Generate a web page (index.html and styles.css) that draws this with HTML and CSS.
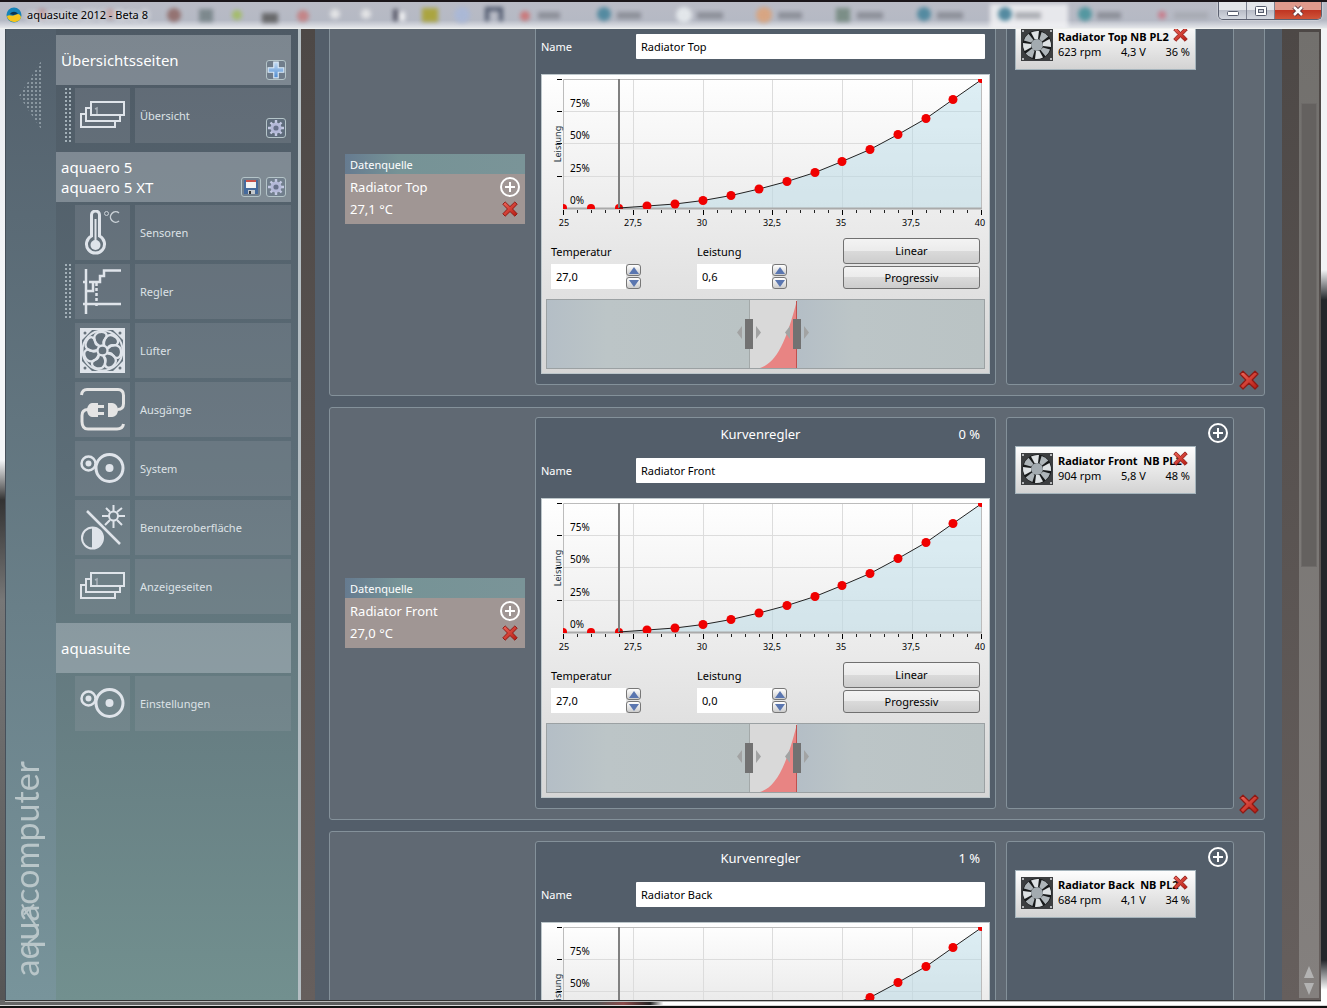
FILE: index.html
```html
<!DOCTYPE html>
<html lang="de">
<head>
<meta charset="utf-8">
<title>aquasuite 2012 - Beta 8</title>
<link rel="stylesheet" href="styles.css">
</head>
<body>
<svg class="sprite" width="0" height="0" aria-hidden="true">
  <defs>
    <linearGradient id="red" x1="0" y1="0" x2="1" y2="1"><stop offset="0" stop-color="#f0685c"/><stop offset="1" stop-color="#b4180f"/></linearGradient>
    <linearGradient id="blue" x1="0" y1="0" x2="0" y2="1"><stop offset="0" stop-color="#c4dcf4"/><stop offset="1" stop-color="#4d8ad0"/></linearGradient>
    <linearGradient id="shade" x1="0" x2="1"><stop offset="0" stop-color="#b4bec6"/><stop offset=".3" stop-color="#bcc5c7"/><stop offset="1" stop-color="#bac3c4"/></linearGradient>
    <pattern id="dots" width="4" height="4" patternUnits="userSpaceOnUse"><rect width="2" height="2" fill="#8a97a0"/></pattern>
    <clipPath id="plot"><rect x="21" y="4" width="419" height="130"/></clipPath>
  </defs>
  <symbol id="cross" viewBox="0 0 20 20">
    <path d="M4 1.200 L10 7 L16 1.200 L19 4 L13.200 10 L19 16 L16 19 L10 13.200 L4 19 L1 16 L6.800 10 L1 4 Z" fill="url(#red)" stroke="#8e1a14" stroke-width="1.200" stroke-linejoin="round"/>
  </symbol>
  <symbol id="add" viewBox="0 0 20 20">
    <circle cx="10" cy="10" r="9" fill="none" stroke="#fff" stroke-width="2"/>
    <path d="M10 5v10M5 10h10" stroke="#fff" stroke-width="2"/>
  </symbol>
  <symbol id="gear" viewBox="0 0 16 16">
    <path d="M8 0v16M0 8h16M2.500 2.500l11 11M13.500 2.500l-11 11" stroke="#c3c9e2" stroke-width="2.400"/>
    <circle cx="8" cy="8" r="4" fill="none" stroke="#b4b9d8" stroke-width="3"/>
    <circle cx="8" cy="8" r="2.600" fill="#67718a"/>
  </symbol>
  <symbol id="pages" viewBox="0 0 45 45">
    <g fill="none" stroke="#dfe4ea" stroke-width="2">
      <rect x="11" y="9" width="33" height="13"/>
      <path d="M11 15H6v13h34v-6M6 21H1v13h34v-6"/>
    </g>
    <path d="M15 16l2-1v6" fill="none" stroke="#aab3bb" stroke-width="1.500"/>
  </symbol>
  <symbol id="thermo" viewBox="0 0 45 45">
    <path d="M11.500 26V5a4 4 0 0 1 8 0v21a9 9 0 1 1-8 0z" fill="none" stroke="#dfe4ea" stroke-width="3"/>
    <circle cx="15.500" cy="35" r="5" fill="#dfe4ea"/>
    <path d="M15.500 9v24" stroke="#dfe4ea" stroke-width="2"/>
    <circle cx="26.500" cy="3.500" r="2" fill="none" stroke="#c9d0d6"/>
    <path d="M39 3a5.200 5.200 0 1 0 0 8" fill="none" stroke="#c9d0d6" stroke-width="1.500"/>
  </symbol>
  <symbol id="control" viewBox="0 0 45 45">
    <g fill="none" stroke="#dfe4ea" stroke-width="2.500">
      <path d="M6 0v45M3 35h38M3 13h4M6 22h7v-9M9 13h11V7h4V1.500h17"/>
      <path d="M16.500 14v24" stroke-dasharray="3 2"/>
    </g>
  </symbol>
  <symbol id="fan" viewBox="0 0 45 45">
    <rect x="1" y="1" width="43" height="43" fill="none" stroke="#dfe4ea" stroke-width="2"/>
    <path d="M1 1h12L1 13zM44 1v12L32 1zM1 44V32l12 12zM44 44H32l12-12z" fill="#dfe4ea"/>
    <g fill="#68747d"><circle cx="5" cy="5" r="1.500"/><circle cx="40" cy="5" r="1.500"/><circle cx="5" cy="40" r="1.500"/><circle cx="40" cy="40" r="1.500"/></g>
    <circle cx="22.500" cy="22.500" r="20" fill="#63707a" stroke="#dfe4ea" stroke-width="2"/>
    <g fill="none" stroke="#dfe4ea" stroke-width="2.300">
      <circle cx="22.500" cy="22.500" r="5"/>
      <path id="blade" d="M19.500 18C13 14 12 6 20 4c7-1 8 4 5 7-2 2-2 4-1 6"/>
      <use href="#blade" transform="rotate(51.400 22.500 22.500)"/>
      <use href="#blade" transform="rotate(102.900 22.500 22.500)"/>
      <use href="#blade" transform="rotate(154.300 22.500 22.500)"/>
      <use href="#blade" transform="rotate(205.700 22.500 22.500)"/>
      <use href="#blade" transform="rotate(257.100 22.500 22.500)"/>
      <use href="#blade" transform="rotate(308.600 22.500 22.500)"/>
    </g>
  </symbol>
  <symbol id="plug" viewBox="0 0 45 45">
    <g fill="none" stroke="#e4e4e4" stroke-width="3">
      <path d="M1.500 8C2 4 4 2.500 7 2.500h31c4 0 5.500 2 5.500 6v8c0 4-2 6-6 6"/>
      <path d="M8 22.500c-4 0-6 2-6 6v6c0 5 2 7.500 6 7.500h29c4 0 6-2 6.500-5"/>
      <path d="M17 19.500h7M17 26.500h7" stroke-width="3"/>
    </g>
    <path d="M18 16v14h-6c-3 0-5-4-5-7s2-7 5-7zM28 16h4c4 0 6 4 6 7s-2 7-6 7h-4z" fill="#e4e4e4"/>
  </symbol>
  <symbol id="rings" viewBox="0 0 45 45">
    <g fill="none" stroke="#dfe4ea">
      <circle cx="29.500" cy="22" r="13.500" stroke-width="3"/>
      <circle cx="8.500" cy="17.500" r="7" stroke-width="2.500"/>
    </g>
    <circle cx="29.500" cy="22" r="4" fill="#dfe4ea"/><circle cx="8.500" cy="17.500" r="3" fill="#dfe4ea"/>
  </symbol>
  <symbol id="display" viewBox="0 0 45 45">
    <g fill="none" stroke="#dfe4ea" stroke-width="2">
      <path d="M7 6l33 33" stroke-width="2.500"/>
      <circle cx="12.500" cy="33" r="10.500"/>
      <circle cx="33.500" cy="11" r="4.500"/>
      <path d="M33.500 0v6M33.500 16v7M22 11h7M38 11h7M26 3l4 4M37 15l5 5M42 3l-5 4M30 15l-5 5"/>
    </g>
    <path d="M12 22.500a10.500 10.500 0 0 1 0 21z" fill="#dfe4ea"/>
  </symbol>
  <symbol id="cooler" viewBox="0 0 32 32">
    <rect width="32" height="32" fill="#3c3e40"/>
    <circle cx="16" cy="16" r="14.500" fill="#17191a"/>
    <g fill="#dde1e3">
      <path id="vane" d="M13.500 10L10 3.500q4-2 8-1.500l-1 8z"/>
      <use href="#vane" transform="rotate(90 16 16)"/><use href="#vane" transform="rotate(180 16 16)"/><use href="#vane" transform="rotate(270 16 16)"/>
    </g>
    <g fill="#aeb5b9">
      <use href="#vane" transform="rotate(45 16 16)"/><use href="#vane" transform="rotate(135 16 16)"/><use href="#vane" transform="rotate(225 16 16)"/><use href="#vane" transform="rotate(315 16 16)"/>
    </g>
    <circle cx="16" cy="16" r="6" fill="#a3abb0"/>
    <g fill="#dfe2e4"><circle cx="2" cy="2" r="1"/><circle cx="30" cy="2" r="1"/><circle cx="2" cy="30" r="1"/><circle cx="30" cy="30" r="1"/></g>
  </symbol>
  <symbol id="curve" viewBox="0 0 447 158">
    <path d="M91.500 4v129M161.500 4v129M230.500 4v129M300.500 4v129M370.500 4v129M22 36.500h417M22 68.500h417M22 101.500h417" stroke="#dcdcdc"/>
    <path d="M77 133L105 131 133 129 161 125.500 189 120.500 217 114 245 106.500 273 97.500 300 86.500 328 74.500 356 59.500 384 43.500 411 24.500 439 5V133z" fill="#add8e6" fill-opacity=".4"/>
    <path d="M21.500 133V4.500H439.500V133" fill="none" stroke="#bcbcbc"/>
    <path d="M21 133.500h419" stroke="#aaa" stroke-width="2"/>
    <g fill="#f00000" clip-path="url(#plot)">
      <circle cx="21" cy="133" r="4"/><circle cx="49" cy="133" r="4"/><circle cx="77" cy="133" r="4"/>
    </g>
    <path d="M77 4v129" stroke="#808080" stroke-width="2"/>
    <path d="M77 133L105 131 133 129 161 125.500 189 120.500 217 114 245 106.500 273 97.500 300 86.500 328 74.500 356 59.500 384 43.500 411 24.500 439 5" fill="none" stroke="#222"/>
    <g fill="#f00000" clip-path="url(#plot)">
      <circle cx="105" cy="131" r="4.500"/><circle cx="133" cy="129" r="4.500"/><circle cx="161" cy="125.500" r="4.500"/><circle cx="189" cy="120.500" r="4.500"/><circle cx="217" cy="114" r="4.500"/><circle cx="245" cy="106.500" r="4.500"/><circle cx="273" cy="97.500" r="4.500"/><circle cx="300" cy="86.500" r="4.500"/><circle cx="328" cy="74.500" r="4.500"/><circle cx="356" cy="59.500" r="4.500"/><circle cx="384" cy="43.500" r="4.500"/><circle cx="411" cy="24.500" r="4.500"/><circle cx="439" cy="5" r="3"/>
    </g>
    <path d="M15 4.500h5M15 36.500h5M15 68.500h5M15 101.500h5M21.500 135v5M91.500 135v5M161.500 135v5M230.500 135v5M300.500 135v5M370.500 135v5M439.500 135v5" stroke="#000"/>
    <path d="M35.500 135v3M49.500 135v3M63.500 135v3M77.500 135v3M105.500 135v3M119.500 135v3M133.500 135v3M147.500 135v3M175.500 135v3M189.500 135v3M203.500 135v3M217.500 135v3M244.500 135v3M258.500 135v3M272.500 135v3M286.500 135v3M314.500 135v3M328.500 135v3M342.500 135v3M356.500 135v3M384.500 135v3M398.500 135v3M411.500 135v3M425.500 135v3" stroke="#222"/>
  </symbol>
  <symbol id="range" viewBox="0 0 439 70">
    <rect width="204" height="70" fill="url(#shade)"/>
    <rect x="251" width="188" height="70" fill="url(#shade)"/>
    <rect x="204" width="47" height="70" fill="#d9d9d9"/>
    <path d="M214 69C230 64 240 44 251 1V69z" fill="#e88483"/>
    <path d="M203.500 0v70" stroke="#a3a9a9"/><path d="M250.500 2v68" stroke="#c0504e"/>
    <rect x=".5" y=".5" width="438" height="69" fill="none" stroke="#9ba1a3"/>
    <path d="M196 27v13l-5-6.500zM210 27v13l5-6.500zM244 27v13l-5-6.500zM258 27v13l5-6.500z" fill="#a2a3a3"/>
    <path d="M199 20h8v30h-8zM247 20h8v30h-8z" fill="#727272"/>
  </symbol>
</svg>

<header class="titlebar">
  <svg class="backdrop" height="29" width="1215" aria-hidden="true">
    <g class="haze">
      <circle cx="42" cy="14" r="5" fill="#b07c80"/><circle cx="110" cy="14" r="5" fill="#c89a98"/><circle cx="174" cy="15" r="7" fill="#8c625e"/><rect x="199" y="9" width="14" height="13" fill="#6f7d80"/><circle cx="237" cy="15" r="5" fill="#a0bd55"/><rect x="262" y="13" width="16" height="10" fill="#555"/><circle cx="303" cy="16" r="6" fill="#c77878"/><circle cx="335" cy="14" r="5" fill="#eee"/><circle cx="366" cy="14" r="5" fill="#eee"/>
      <rect x="393" y="9" width="5" height="12" fill="#445"/><rect x="399" y="12" width="6" height="9" fill="#fff"/><rect x="422" y="8" width="16" height="14" fill="#a8a020"/><circle cx="462" cy="15" r="8" fill="#a8b8da"/><path d="M487 21V9h14v12" stroke="#39445c" stroke-width="4" fill="none"/>
      <circle cx="525" cy="16" r="5" fill="#cf6a6a"/><rect x="538" y="12" width="22" height="7" fill="#83868f"/>
      <circle cx="604" cy="14" r="7" fill="#3c7f98"/><rect x="617" y="12" width="24" height="7" fill="#83868f"/>
      <circle cx="684" cy="15" r="8" fill="#eef2f4"/><rect x="697" y="12" width="26" height="7" fill="#83868f"/>
      <circle cx="764" cy="15" r="8" fill="#e0a173"/><rect x="778" y="12" width="24" height="7" fill="#83868f"/>
      <rect x="836" y="8" width="14" height="14" fill="#6d8478"/><rect x="857" y="12" width="26" height="7" fill="#83868f"/>
      <circle cx="924" cy="14" r="7" fill="#3c7f98"/><rect x="937" y="12" width="26" height="7" fill="#83868f"/>
      <rect x="990" y="4" width="78" height="25" fill="#f4f4f6"/><circle cx="1005" cy="14" r="7" fill="#3c7f98"/><rect x="1015" y="12" width="26" height="7" fill="#abadb2"/>
      <circle cx="1085" cy="14" r="7" fill="#3c8f98"/><rect x="1097" y="12" width="24" height="7" fill="#83868f"/>
      <circle cx="1162" cy="15" r="4" fill="#cc7080"/><rect x="1174" y="12" width="34" height="7" fill="#a5a8b0"/>
    </g>
  </svg>
  <svg class="appicon" viewBox="0 0 16 16" width="16" height="16" aria-hidden="true"><circle cx="8" cy="8" r="7.500" fill="#1683b8"/><path d="M1 9c3-2 5 1 8-1s5-1 6 2c0 3-4 5-7 5S1 12 1 9z" fill="#f4c51e"/><path d="M4 7c2-3 6-3 8 0-3 0-4 2-8 0z" fill="#0b3550"/></svg>
  <h1 class="title">aquasuite 2012 - Beta 8</h1>
  <div class="winbuttons">
    <button class="winbtn" aria-label="Minimieren"><svg viewBox="0 0 14 12" width="14" height="12"><rect x="1.500" y="6.500" width="11" height="4" rx="1" fill="#fff" stroke="#555b6c"/></svg></button>
    <button class="winbtn" aria-label="Maximieren"><svg viewBox="0 0 14 12" width="14" height="12"><rect x="1.500" y="1.500" width="11" height="9" rx="1" fill="#fff" stroke="#555b6c"/><rect x="4.500" y="4.500" width="5" height="3" fill="#c8ccd6" stroke="#555b6c"/></svg></button>
    <button class="winbtn close" aria-label="Schließen"><svg viewBox="0 0 14 12" width="14" height="12"><path d="M3 2l8 8M11 2l-8 8" stroke="#5a3038" stroke-width="4.500"/><path d="M3 2l8 8M11 2l-8 8" stroke="#fff" stroke-width="2.500"/></svg></button>
  </div>
</header>

<div class="window">
  <aside class="rail">
    <svg class="collapse" viewBox="0 0 24 74" width="24" height="74" aria-hidden="true"><path d="M24 0v74L0 38z" fill="url(#dots)"/></svg>
    <div class="brand">aquacomputer
      <svg class="swirl" viewBox="0 0 24 60" width="24" height="60" aria-hidden="true"><path d="M4 6C8 16 18 24 20 32c1 8-6 8-9 12-2 4 1 8 1 12M6 16l10-10" fill="none" stroke="#b9c6c9" stroke-width="2"/></svg>
    </div>
  </aside>

  <nav class="menu">
    <section class="group">
      <div class="head"><h2>Übersichtsseiten</h2>
        <div class="tools"><button class="tool" aria-label="Seite hinzufügen"><svg viewBox="0 0 16 16" width="18" height="18"><path d="M6 1h4v5h5v4h-5v5H6v-5H1V6h5z" fill="url(#blue)" stroke="#dcebf8"/></svg></button></div>
      </div>
      <div class="item"><span class="grip"></span><a class="link" href="#uebersicht"><span class="tile"><svg><use href="#pages"/></svg></span><span class="label">Übersicht</span></a>
        <button class="tool ontile" aria-label="Übersicht bearbeiten"><svg viewBox="0 0 16 16" width="16" height="16"><use href="#gear"/></svg></button></div>
    </section>
    <section class="group">
      <div class="head"><h2>aquaero 5<br>aquaero 5 XT</h2>
        <div class="tools">
          <button class="tool" aria-label="Speichern"><svg viewBox="0 0 16 16" width="16" height="16"><rect x="1" y="1" width="14" height="14" fill="#456a9c"/><rect x="3" y="1" width="10" height="8" fill="#f4f4f4"/><rect x="3" y="1" width="10" height="2" fill="#c8544c"/><rect x="5" y="11" width="7" height="4" fill="#c4c8cc"/><rect x="6" y="12" width="2" height="3" fill="#333"/></svg></button>
          <button class="tool" aria-label="Gerät einstellen"><svg viewBox="0 0 16 16" width="16" height="16"><use href="#gear"/></svg></button>
        </div>
      </div>
      <div class="item"><a class="link" href="#sensoren"><span class="tile"><svg><use href="#thermo"/></svg></span><span class="label">Sensoren</span></a></div>
      <div class="item"><span class="grip"></span><a class="link" href="#regler"><span class="tile"><svg><use href="#control"/></svg></span><span class="label">Regler</span></a></div>
      <div class="item"><a class="link" href="#luefter"><span class="tile"><svg><use href="#fan"/></svg></span><span class="label">Lüfter</span></a></div>
      <div class="item"><a class="link" href="#ausgaenge"><span class="tile"><svg><use href="#plug"/></svg></span><span class="label">Ausgänge</span></a></div>
      <div class="item"><a class="link" href="#system"><span class="tile"><svg><use href="#rings"/></svg></span><span class="label">System</span></a></div>
      <div class="item"><a class="link" href="#oberflaeche"><span class="tile"><svg><use href="#display"/></svg></span><span class="label">Benutzeroberfläche</span></a></div>
      <div class="item"><a class="link" href="#anzeigeseiten"><span class="tile"><svg><use href="#pages"/></svg></span><span class="label">Anzeigeseiten</span></a></div>
    </section>
    <section class="group">
      <div class="head"><h2>aquasuite</h2></div>
      <div class="item"><a class="link" href="#einstellungen"><span class="tile"><svg><use href="#rings"/></svg></span><span class="label">Einstellungen</span></a></div>
    </section>
  </nav>

  <main class="main">
    <div class="list">

      <article class="panel">
        <section class="source">
          <h3>Datenquelle</h3>
          <div class="sourcebody">
            <p>Radiator Top</p><button class="icon" aria-label="Datenquelle wählen"><svg><use href="#add"/></svg></button>
            <p>27,1 °C</p><button class="icon small" aria-label="Datenquelle entfernen"><svg><use href="#cross"/></svg></button>
          </div>
        </section>
        <section class="curve">
          <div class="curvehead"></div>
          <div class="namerow"><label for="n1">Name</label><input id="n1" type="text" value="Radiator Top"></div>
          <div class="card">
            <svg class="chart" viewBox="0 0 447 158">
              <use href="#curve"/>
              <g class="axis"><text x="28" y="32">75%</text><text x="28" y="64">50%</text><text x="28" y="97">25%</text><text x="28" y="129">0%</text></g>
              <g class="axis mid"><text x="22" y="151">25</text><text x="91" y="151">27,5</text><text x="160" y="151">30</text><text x="230" y="151">32,5</text><text x="299" y="151">35</text><text x="369" y="151">37,5</text><text x="438" y="151">40</text></g>
              <text class="ylabel" transform="translate(19 69) rotate(-90)">Leistung</text>
            </svg>
            <div class="form">
              <div class="field"><label for="t1">Temperatur</label><div class="spin"><input id="t1" type="text" value="27,0"><div class="steps"><button aria-label="Temperatur erhöhen"><i class="up"></i></button><button aria-label="Temperatur senken"><i class="down"></i></button></div></div></div>
              <div class="field"><label for="l1">Leistung</label><div class="spin"><input id="l1" type="text" value="0,6"><div class="steps"><button aria-label="Leistung erhöhen"><i class="up"></i></button><button aria-label="Leistung senken"><i class="down"></i></button></div></div></div>
              <div class="modes"><button>Linear</button><button>Progressiv</button></div>
            </div>
            <svg class="range" viewBox="0 0 439 70"><use href="#range"/></svg>
          </div>
        </section>
        <section class="outputs">
          <button class="icon" aria-label="Ausgang hinzufügen"><svg><use href="#add"/></svg></button>
          <div class="output"><svg class="cooler"><use href="#cooler"/></svg>
            <div class="info"><strong>Radiator Top NB PL2</strong><div class="values"><span>623 rpm</span><span>4,3 V</span><span>36 %</span></div></div>
            <button class="remove" aria-label="Ausgang entfernen"><svg><use href="#cross"/></svg></button></div>
        </section>
        <button class="icon delete" aria-label="Regler löschen"><svg><use href="#cross"/></svg></button>
      </article>

      <article class="panel">
        <section class="source">
          <h3>Datenquelle</h3>
          <div class="sourcebody">
            <p>Radiator Front</p><button class="icon" aria-label="Datenquelle wählen"><svg><use href="#add"/></svg></button>
            <p>27,0 °C</p><button class="icon small" aria-label="Datenquelle entfernen"><svg><use href="#cross"/></svg></button>
          </div>
        </section>
        <section class="curve">
          <div class="curvehead"><h3>Kurvenregler</h3><output>0 %</output></div>
          <div class="namerow"><label for="n2">Name</label><input id="n2" type="text" value="Radiator Front"></div>
          <div class="card">
            <svg class="chart" viewBox="0 0 447 158">
              <use href="#curve"/>
              <g class="axis"><text x="28" y="32">75%</text><text x="28" y="64">50%</text><text x="28" y="97">25%</text><text x="28" y="129">0%</text></g>
              <g class="axis mid"><text x="22" y="151">25</text><text x="91" y="151">27,5</text><text x="160" y="151">30</text><text x="230" y="151">32,5</text><text x="299" y="151">35</text><text x="369" y="151">37,5</text><text x="438" y="151">40</text></g>
              <text class="ylabel" transform="translate(19 69) rotate(-90)">Leistung</text>
            </svg>
            <div class="form">
              <div class="field"><label for="t2">Temperatur</label><div class="spin"><input id="t2" type="text" value="27,0"><div class="steps"><button aria-label="Temperatur erhöhen"><i class="up"></i></button><button aria-label="Temperatur senken"><i class="down"></i></button></div></div></div>
              <div class="field"><label for="l2">Leistung</label><div class="spin"><input id="l2" type="text" value="0,0"><div class="steps"><button aria-label="Leistung erhöhen"><i class="up"></i></button><button aria-label="Leistung senken"><i class="down"></i></button></div></div></div>
              <div class="modes"><button>Linear</button><button>Progressiv</button></div>
            </div>
            <svg class="range" viewBox="0 0 439 70"><use href="#range"/></svg>
          </div>
        </section>
        <section class="outputs">
          <button class="icon" aria-label="Ausgang hinzufügen"><svg><use href="#add"/></svg></button>
          <div class="output"><svg class="cooler"><use href="#cooler"/></svg>
            <div class="info"><strong>Radiator Front&nbsp; NB PL2</strong><div class="values"><span>904 rpm</span><span>5,8 V</span><span>48 %</span></div></div>
            <button class="remove" aria-label="Ausgang entfernen"><svg><use href="#cross"/></svg></button></div>
        </section>
        <button class="icon delete" aria-label="Regler löschen"><svg><use href="#cross"/></svg></button>
      </article>

      <article class="panel">
        <section class="source"></section>
        <section class="curve">
          <div class="curvehead"><h3>Kurvenregler</h3><output>1 %</output></div>
          <div class="namerow"><label for="n3">Name</label><input id="n3" type="text" value="Radiator Back"></div>
          <div class="card">
            <svg class="chart" viewBox="0 0 447 158">
              <use href="#curve"/>
              <g class="axis"><text x="28" y="32">75%</text><text x="28" y="64">50%</text></g>
              <text class="ylabel" transform="translate(19 69) rotate(-90)">Leistung</text>
            </svg>
          </div>
        </section>
        <section class="outputs">
          <button class="icon" aria-label="Ausgang hinzufügen"><svg><use href="#add"/></svg></button>
          <div class="output"><svg class="cooler"><use href="#cooler"/></svg>
            <div class="info"><strong>Radiator Back&nbsp; NB PL2</strong><div class="values"><span>684 rpm</span><span>4,1 V</span><span>34 %</span></div></div>
            <button class="remove" aria-label="Ausgang entfernen"><svg><use href="#cross"/></svg></button></div>
        </section>
      </article>
    </div>
  </main>

  <div class="scroll">
    <div class="track"><div class="thumb"></div><i class="arrow up"></i><i class="arrow down"></i></div>
  </div>
</div>
</body>
</html>
```
FILE: styles.css
```css
* { box-sizing: border-box; }
body {
  margin: 0;
  height: 100vh;
  display: flex;
  flex-direction: column;
  overflow: hidden;
  font: 11px/16px "Noto Sans", "Open Sans", sans-serif;
  color: #fff;
  background:
    linear-gradient(#d8d8d8, #d8d8d8) bottom 2px left 0 / 100% 1px no-repeat,
    linear-gradient(#111, #111) bottom / 100% 2px no-repeat,
    linear-gradient(90deg, #666, #555 45%, #8a4a4a 47%, #222 49%, #fff 50%) bottom / 100% 8px no-repeat,
    linear-gradient(#f2f3f5 270px, #24262a 300px, #24262a 960px, #fff 990px) right / 6px 100% no-repeat,
    linear-gradient(#e6e9ee, #f4f6f8 300px, #f4f6f8 460px, #333 500px, #777 600px, #555);
}
h1, h2, h3, p { margin: 0; font-weight: 400; }
button, input { font: inherit; color: inherit; padding: 0; margin: 0; border: 0; background: none; }
button svg { display: block; }
.sprite { position: absolute; }

/* title bar */
.titlebar {
  position: relative;
  flex: none;
  height: 29px;
  display: flex;
  align-items: center;
  gap: 5px;
  padding-left: 6px;
  border-top: 2px solid #1a1519;
  border-bottom: 1px solid #eef0ee;
  background: linear-gradient(#b9bbc5, #b5b9c4 70%, #e4e6ea);
  color: #000;
  overflow: hidden;
}
.backdrop { position: absolute; left: 0; top: -2px; }
.haze { filter: blur(2px); opacity: .8; }
.appicon, .title { position: relative; }
.title { flex: 1; font-size: 11px; text-shadow: 0 0 6px #fff, 0 0 6px #fff; }
.winbuttons {
  position: relative;
  align-self: flex-start;
  display: flex;
  margin-right: 5px;
  border: 1px solid #5b6070;
  border-top: 0;
  border-radius: 0 0 5px 5px;
  overflow: hidden;
  box-shadow: 0 0 2px #fff;
}
.winbtn {
  width: 28px;
  height: 17px;
  display: grid;
  place-items: center;
  border-right: 1px solid #7c8190;
  background: linear-gradient(#e4e6ea 45%, #b9bdc8 50%, #d4d8e0);
}
.winbtn.close { width: 46px; border: 0; background: linear-gradient(#e09a8c 45%, #c03522 50%, #d0553a); }

/* window body */
.window {
  flex: 1;
  min-height: 0;
  display: flex;
  margin: 0 6px 8px 5px;
  border-left: 1px solid #46505a;
  background: linear-gradient(#4d4846, #665f5d);
  box-shadow: 0 1px #333, 0 2px #bbb;
}
.rail {
  flex: none;
  width: 50px;
  display: flex;
  flex-direction: column;
  justify-content: space-between;
  align-items: center;
  padding: 29px 0 24px;
  background: linear-gradient(#53606c, #78949b);
}
.brand {
  position: relative;
  margin-right: 10px;
  writing-mode: vertical-rl;
  transform: rotate(180deg);
  font: 400 34px/40px Lato, sans-serif;
  color: #b9c6c9;
}
.swirl { position: absolute; left: 4px; top: 18px; transform: rotate(180deg); }

.menu {
  flex: none;
  width: 245px;
  display: flex;
  flex-direction: column;
  gap: 9px;
  padding: 6px 7px 0 0;
  border-right: 3px solid #b4bec3;
  background: linear-gradient(#4e5a65, #5c6d77 45%, #72908f);
}
.group { display: flex; flex-direction: column; gap: 4px; }
.head {
  display: flex;
  align-items: center;
  height: 50px;
  margin-bottom: -1px;
  padding: 0 5px;
  background: rgba(220, 225, 230, .33);
}
.head h2 { flex: 1; font-size: 15px; line-height: 20px; }
.tools { align-self: flex-end; display: flex; gap: 5px; padding-bottom: 5px; }
.tool {
  width: 20px;
  height: 20px;
  display: grid;
  place-items: center;
  border: 1px solid #b4c4c8;
  border-radius: 3px;
  background: rgba(90, 105, 130, .35);
}
.item { position: relative; display: flex; justify-content: flex-end; gap: 4px; height: 55px; }
.grip {
  width: 6px;
  height: 56px;
  background: conic-gradient(#a3b0b8 25%, transparent 0) -2px 0 / 4px 4px;
}
.link { display: flex; gap: 5px; width: 216px; color: #dde2e6; text-decoration: none; }
.tile, .label { display: flex; align-items: center; background: rgba(160, 165, 172, .22); }
.tile { width: 55px; justify-content: center; }
.tile svg { width: 45px; height: 45px; }
.label { flex: 1; padding-left: 5px; }
.ontile { position: absolute; right: 5px; bottom: 5px; }

/* controller list, scrolled down a little */
.main { flex: 1; min-width: 0; margin: 0 17px 0 14px; padding: 0 17px 0 14px; background: #535e6a; overflow: hidden; }
.list { display: flex; flex-direction: column; gap: 11px; margin-top: -46px; }
.panel {
  display: grid;
  grid-template-columns: 180px 1fr 228px 15px;
  column-gap: 10px;
  padding: 9px 5px 10px 15px;
  border: 1px solid #84919a;
  border-radius: 3px;
  background: #606973;
}
.source { align-self: center; }
.source h3 {
  height: 20px;
  padding-left: 5px;
  font-size: 11px;
  line-height: 21px;
  background: linear-gradient(90deg, #667b90, #769396 30%, #7a9498);
}
.sourcebody {
  display: grid;
  grid-template-columns: 1fr 20px;
  align-items: center;
  row-gap: 2px;
  height: 50px;
  padding: 3px 5px 5px;
  background: #a09694;
  font-size: 13px;
}
.icon { width: 20px; height: 20px; }
.icon svg { width: 20px; height: 20px; }
.icon.small svg { width: 16px; height: 16px; margin: 0 auto; }
.icon.delete { align-self: end; justify-self: end; margin-bottom: -5px; }

.curve, .outputs { border: 1px solid #84919a; border-radius: 3px; background: #535e6a; }
.curve { padding: 0 5px 10px; }
.curvehead { display: grid; grid-template-columns: 1fr auto 1fr; align-items: center; height: 32px; padding-right: 10px; font-size: 13px; }
.curvehead h3 { grid-column: 2; font-size: 13px; }
.curvehead output { text-align: right; }
.namerow { display: grid; grid-template-columns: 95px 1fr; align-items: center; padding: 8px 5px 15px 0; }
.namerow input { height: 25px; padding: 0 5px; background: #fff; color: #000; border-radius: 1px; width: 100%; }
.card { border: 1px solid #bcc6ca; background: linear-gradient(#fff, #d6d6d6); color: #000; }
.chart { display: block; width: 100%; }
.axis { font-size: 10px; }
.mid, .ylabel { text-anchor: middle; font-size: 9px; }
.ylabel { fill: #1c3540; }
.form { display: grid; grid-template-columns: repeat(3, 1fr); gap: 9px; padding: 5px 9px 10px; }
.field label { display: block; height: 26px; line-height: 27px; }
.spin { display: flex; height: 25px; }
.spin input { width: 75px; padding-left: 5px; background: #fff; }
.steps { display: grid; gap: 1px; width: 15px; }
.steps button { display: grid; place-items: center; border: 1px solid #777; border-radius: 3px; background: linear-gradient(#fff, #ccc); }
.steps i, .arrow { border: 5px solid transparent; border-top: 0; border-bottom: 7px solid #5a76b0; }
.steps .down, .arrow.down { border-top: 7px solid #5a76b0; border-bottom: 0; }
.modes { display: grid; grid-template-rows: 26px 23px; gap: 2px; }
.modes button {
  border: 1px solid #707070;
  border-radius: 3px;
  background: linear-gradient(#f3f3f3, #ebebeb 50%, #dadada 50%, #cdcdcd);
}
.range { display: block; width: calc(100% - 8px); margin: 0 4px 4px; }

.outputs { padding: 5px 5px 0 8px; display: flex; flex-direction: column; gap: 3px; }
.outputs > .icon { align-self: flex-end; }
.output {
  position: relative;
  display: flex;
  gap: 5px;
  width: 181px;
  height: 48px;
  padding: 6px 5px;
  border: 1px solid #a5b4bc;
  background: linear-gradient(#fdfdfd, #d3d3d3);
  color: #000;
}
.cooler { width: 32px; height: 32px; flex: none; }
.info { flex: 1; white-space: nowrap; }
.info strong { display: block; font-size: 11px; line-height: 15px; }
.values { display: flex; justify-content: space-between; line-height: 16px; }
.remove { position: absolute; right: 7px; top: 4px; width: 15px; height: 15px; }
.remove svg { width: 15px; height: 15px; }

/* scroll bar */
.scroll { flex: none; width: 22px; padding: 3px 0 2px; }
.track {
  height: 100%;
  width: 20px;
  display: flex;
  flex-direction: column;
  align-items: center;
  gap: 5px;
  padding: 71px 0 3px;
  background: linear-gradient(#72706d, #84807e);
}
.thumb { width: 16px; flex: none; height: 52%; margin-bottom: auto; background: #64615f; border: 1px solid #6e6b69; }
.arrow { border-bottom: 12px solid #b3b3b3; }
.arrow.down { border-top: 12px solid #b3b3b3; }
```
